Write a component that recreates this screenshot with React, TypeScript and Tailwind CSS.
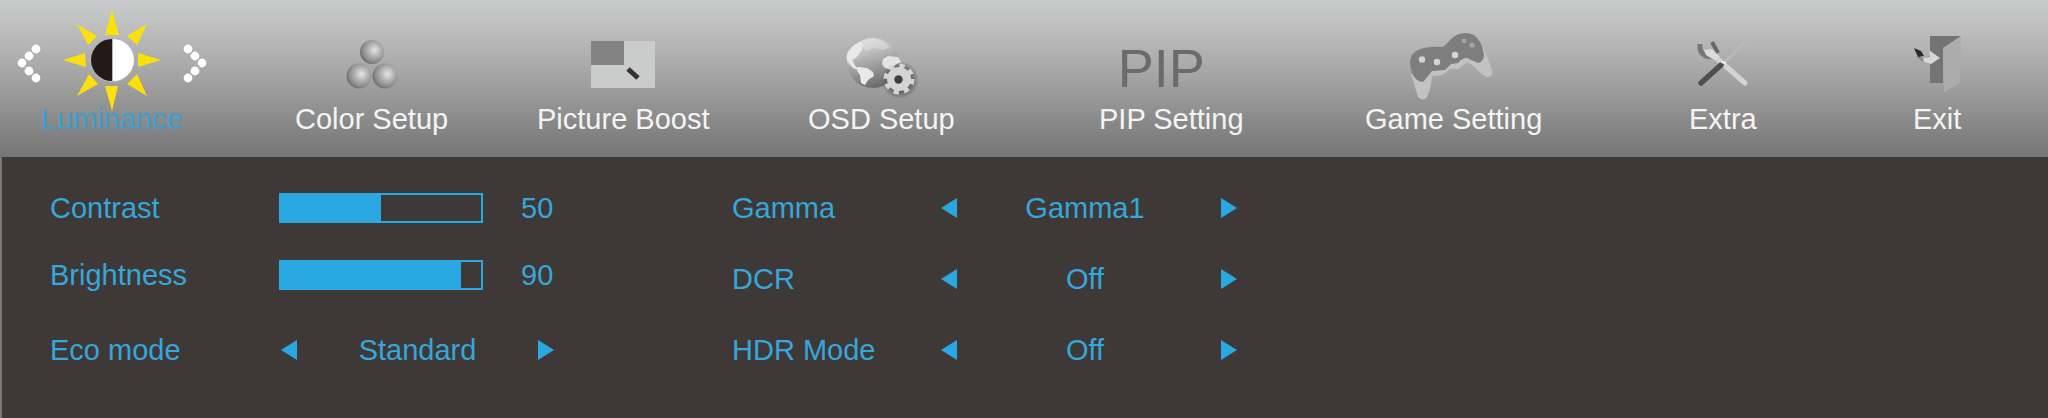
import { useState } from "react";
import type { ReactNode } from "react";

const dotsLeft = [
  [37, 49],
  [30, 56],
  [23, 63],
  [30, 71],
  [37, 78],
];

function LuminanceIcon() {
  return (
    <svg viewBox="13 0 200 112" className="h-28 w-[200px] shrink-0">
      {dotsLeft.map(([x, y]) => (
        <g key={y} fill="#fff">
          <circle cx={x} cy={y} r="4.4" />
          <circle cx={226 - x} cy={y} r="4.4" />
        </g>
      ))}
      <path
        fill="#fbe00c"
        d="M113 10l7 25h-14zM113 111l-7-25h13zM64 60l22-7 1 14zM162 60l-23-7v14zM78 24l20 12-9 9zM148 24l-20 12 10 9zM78 96l12-22 9 10zM148 96l-10-22-10 10z"
      />
      <circle cx="113" cy="60" r="22.5" fill="#b3b3b6" />
      <path fill="#231916" d="M113 39a21 21 0 0 0 0 42z" />
      <path fill="#fff" d="M114 39a21 21 0 0 1 0 42z" />
    </svg>
  );
}

function ColorIcon() {
  return (
    <svg viewBox="340 0 64 112" className="h-28 w-16">
      <defs>
        <radialGradient id="ball" cx="0.6" cy="0.42" r="0.6">
          <stop offset="0" stopColor="#e6e6e6" />
          <stop offset="0.4" stopColor="#b8b8b8" />
          <stop offset="0.8" stopColor="#8d8d8d" />
          <stop offset="1" stopColor="#717171" />
        </radialGradient>
      </defs>
      <circle cx="372" cy="52" r="12" fill="url(#ball)" />
      <circle cx="359" cy="76" r="12.5" fill="url(#ball)" />
      <circle cx="385" cy="76" r="12.5" fill="url(#ball)" />
    </svg>
  );
}

function PictureIcon() {
  return (
    <svg viewBox="592 0 64 112" className="h-28 w-16">
      <path fill="#cacccb" d="M592 41h64v47h-64z" />
      <path fill="#838383" d="M592 41h33v24h-33z" />
      <path stroke="#333" strokeWidth="5" d="M629 69l10 9" />
    </svg>
  );
}

function OsdIcon() {
  return (
    <svg viewBox="845 0 76 112" className="h-28 w-[76px]">
      <defs>
        <linearGradient id="globe" x1="0.3" y1="0" x2="0.6" y2="1">
          <stop offset="0" stopColor="#e2e2e2" />
          <stop offset="0.5" stopColor="#a5a5a5" />
          <stop offset="1" stopColor="#686868" />
        </linearGradient>
        <radialGradient id="gearShade">
          <stop offset="0.5" stopColor="#555" />
          <stop offset="1" stopColor="#555" stopOpacity="0" />
        </radialGradient>
      </defs>
      <ellipse cx="875" cy="63" rx="26" ry="25" fill="url(#globe)" />
      <path
        fill="#e9e9e9"
        d="M849 61q-2-8 5-14 5-5 11-5l-1 8-6 8-4 2 4 7 5 1-1 3-7-3zM861 67l8 1 6 4 1 4-6 4-3 5-4-2-1-8-3-4z"
      />
      <path fill="#dedede" opacity=".55" d="M862 43q9-6 20-3l10 7-7 3-9-2-8 3z" />
      <circle cx="902" cy="80" r="19" fill="url(#gearShade)" />
      <path fill="#e4e4e4" d="M885 59l5-3 10 1 3 5-6 3-3 5-7-2-3-4z" />
      <circle cx="901" cy="79" r="12" fill="#d4d4d4" />
      <circle
        cx="901"
        cy="79"
        r="13"
        fill="none"
        stroke="#d4d4d4"
        strokeWidth="5"
        strokeDasharray="5.2 5.01"
      />
      <circle cx="900.5" cy="79.5" r="4.2" fill="#3f3f3f" />
    </svg>
  );
}

function PipIcon() {
  return (
    <span
      aria-hidden="true"
      className="flex h-28 items-center pt-6 pr-5 text-[54px] leading-none text-[#6b6b6b]"
    >
      PIP
    </span>
  );
}

function GameIcon() {
  return (
    <svg viewBox="1405 0 98 112" className="h-28 w-[98px]">
      <path
        fill="#c2c2c2"
        d="M1411 74l7 23q5 5 9 0 4-9 5-21l10-1 8-6 8 0 9-7 5 3 11 10q6 4 9 0 1-4-1-8l-8-21-20 12z"
      />
      <path
        fill="#7e7e7e"
        d="M1410 62q0-8 8-12 10-4 25-3 3-2 7-7 7-7 15-7 8 0 12 5 6 6 7 18-1 6-6 7l-11-5q-5 0-9 5l-7 1-6 6-13 1-9 11q-6 0-10-7-3-6-3-13z"
      />
      <circle cx="1422" cy="59.5" r="3.2" fill="#d5d5d5" />
      <circle cx="1437" cy="62" r="3.2" fill="#d5d5d5" />
      <circle cx="1455" cy="55" r="3.2" fill="#d5d5d5" />
      <circle cx="1464" cy="41" r="2.4" fill="#a5a5a5" />
      <circle cx="1472" cy="45" r="2.6" fill="#a5a5a5" />
    </svg>
  );
}

function ExtraIcon() {
  return (
    <svg viewBox="1690 0 64 112" className="h-28 w-16" fill="none">
      <path stroke="#b9b9b9" strokeWidth="3" d="M1743 43l-20 20" />
      <path stroke="#d4d4d4" strokeWidth="5" strokeLinecap="round" d="M1713 56l31 27" />
      <path stroke="#777" strokeWidth="5" d="M1699 44q-1 9 6 12l7 1" />
      <path stroke="#686868" strokeWidth="4" d="M1711 42l6 11" />
      <path fill="#dcdcdc" d="M1703 50l8-1 8 8-6 3-8-5z" />
      <path stroke="#4f4f4f" strokeWidth="5.5" strokeLinecap="round" d="M1720 65l-20 18" />
      <path stroke="#eee" strokeWidth="2" d="M1720 62l5 1" />
    </svg>
  );
}

function ExitIcon() {
  return (
    <svg viewBox="1908 0 56 112" className="h-28 w-14">
      <path fill="#747474" d="M1929 36h31l-18 12v35h-13z" />
      <path fill="#acacac" d="M1942 48l18-11-1 46-16 9z" />
      <path fill="#8a8a8a" d="M1915 56l7 2 8-2 2 8q-10 0-17-8z" />
      <path fill="#d6d6d6" d="M1922 58l7-1-1-7 11 8-9 6-7-2z" />
      <path fill="#292929" d="M1913 48l7 3 3 5-6 1z" />
    </svg>
  );
}

const menu: { label: string; icon: ReactNode }[] = [
  { label: "Luminance", icon: <LuminanceIcon /> },
  { label: "Color Setup", icon: <ColorIcon /> },
  { label: "Picture Boost", icon: <PictureIcon /> },
  { label: "OSD Setup", icon: <OsdIcon /> },
  { label: "PIP Setting", icon: <PipIcon /> },
  { label: "Game Setting", icon: <GameIcon /> },
  { label: "Extra", icon: <ExtraIcon /> },
  { label: "Exit", icon: <ExitIcon /> },
];

function Arrow({ flip }: { flip?: boolean }) {
  return (
    <svg viewBox="0 0 16 20" className="h-5 w-4" fill="#2aa8e2">
      <path d={flip ? "M0 0l16 10-16 10z" : "M16 0L0 10l16 10z"} />
    </svg>
  );
}

interface SliderProps {
  id: string;
  label: string;
  initial: number;
}
function Slider({ id, label, initial }: SliderProps) {
  const [value, setValue] = useState(initial);

  return (
    <div className="flex h-9 items-center">
      <label htmlFor={id} className="w-[229px]">
        {label}
      </label>
      <input
        id={id}
        type="range"
        min={0}
        max={100}
        value={value}
        onChange={(e) => setValue(Number(e.target.value))}
        className="h-[30px] w-[204px] appearance-none border-2 border-[#2aa8e2] [&::-webkit-slider-thumb]:h-7 [&::-webkit-slider-thumb]:w-1 [&::-webkit-slider-thumb]:appearance-none"
        style={{
          backgroundImage: `linear-gradient(to right, #2aa8e2 ${value}%, transparent ${value}%)`,
        }}
      />
      <output htmlFor={id} className="ml-[38px]">
        {value}
      </output>
    </div>
  );
}

interface StepperProps {
  label: string;
  options: string[];
  labelClass: string;
  controlClass: string;
}
function Stepper({ label, options, labelClass, controlClass }: StepperProps) {
  const [index, setIndex] = useState(0);
  const step = (by: number) =>
    setIndex((index + by + options.length) % options.length);

  return (
    <div role="group" aria-label={label} className="flex h-9 items-center">
      <span className={labelClass}>{label}</span>
      <div className={controlClass}>
        <button type="button" aria-label={`Previous ${label}`} onClick={() => step(-1)}>
          <Arrow />
        </button>
        <output>{options[index]}</output>
        <button type="button" aria-label={`Next ${label}`} onClick={() => step(1)}>
          <Arrow flip />
        </button>
      </div>
    </div>
  );
}

const pictureModes = [
  { label: "Gamma", options: ["Gamma1", "Gamma2", "Gamma3"] },
  { label: "DCR", options: ["Off", "On"] },
  { label: "HDR Mode", options: ["Off", "On"] },
];

export default function App() {
  const [active, setActive] = useState("Luminance");

  return (
    <div className="flex min-h-screen flex-col bg-[#3e3937] font-['Liberation_Sans',Arial,sans-serif] text-[29px] leading-[34px]">
      <nav className="grid grid-cols-[254fr_242fr_271fr_291fr_266fr_324fr_224fr_135fr] bg-linear-to-b from-[#cbcdcc] via-[#a3a3a3] to-[#757575] pb-[21px] pl-[41px]">
        {menu.map(({ label, icon }) => (
          <button
            key={label}
            type="button"
            aria-current={active === label ? "page" : undefined}
            onClick={() => setActive(label)}
            className="flex w-0 min-w-min flex-col items-center whitespace-nowrap"
          >
            <span className="flex w-0 justify-center">
              <span className="shrink-0">{icon}</span>
            </span>
            <span
              className={
                active === label
                  ? "-mt-[10px] text-[#3b9fce]"
                  : "-mt-[10px] text-[#f4f4f4]"
              }
            >
              {label}
            </span>
          </button>
        ))}
      </nav>
      <main className="grid flex-1 grid-cols-[682fr_1316fr] border-l-2 border-[#777] pt-[33px] pb-12 pl-12 text-[#35a7db]">
        <section className="flex flex-col gap-[31px]">
          <Slider id="contrast" label="Contrast" initial={50} />
          <Slider id="brightness" label="Brightness" initial={90} />
          <div className="pt-2">
            <Stepper
              label="Eco mode"
              options={["Standard", "Text", "Movie"]}
              labelClass="w-[231px]"
              controlClass="flex w-[273px] items-center justify-between"
            />
          </div>
        </section>
        <section className="flex flex-col gap-[35px]">
          {pictureModes.map((mode) => (
            <Stepper
              key={mode.label}
              {...mode}
              labelClass="w-[209px]"
              controlClass="flex w-[296px] items-center justify-between [&>output]:pr-2"
            />
          ))}
        </section>
      </main>
    </div>
  );
}
